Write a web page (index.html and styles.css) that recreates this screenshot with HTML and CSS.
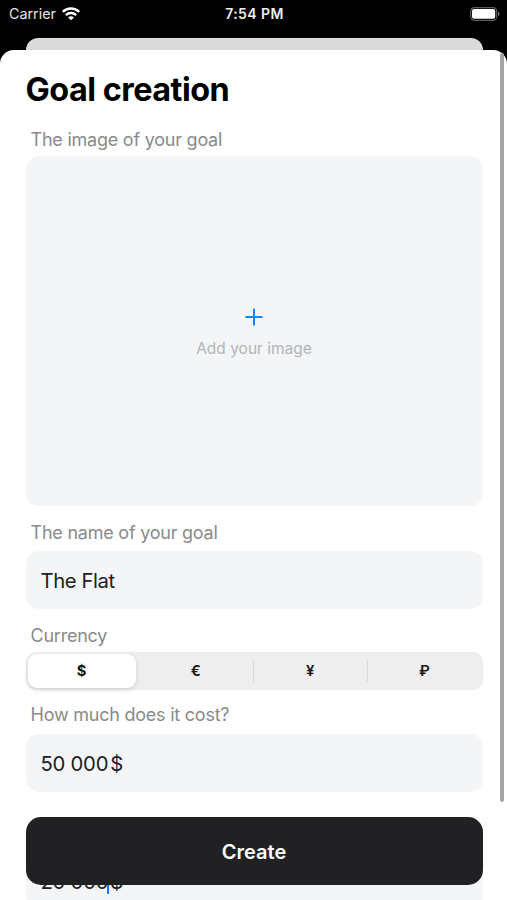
FILE: index.html
```html
<!DOCTYPE html>
<html lang="en">
<head>
<meta charset="utf-8">
<title>Goal creation</title>
<link rel="stylesheet" href="styles.css">
</head>
<body>
<div class="screen">
  <header class="status">
    <div class="carrier"><span>Carrier</span>
      <svg class="wifi" width="18" height="14" viewBox="0 0 18 14" fill="none" stroke="#fff" stroke-width="2.4">
        <path d="M.8 4.8C5.3.3 12.7.3 17.2 4.8"/>
        <path d="M3.8 8.1c2.9-2.8 7.5-2.8 10.4 0"/>
        <path d="M9 13.3 6.1 10.4c1.6-1.5 4.2-1.5 5.8 0z" fill="#fff" stroke="none"/>
      </svg>
    </div>
    <div class="time">7:54 PM</div>
    <svg class="battery" width="30" height="14" viewBox="0 0 30 14">
      <rect x=".7" y=".7" width="26" height="12.6" rx="3.6" fill="none" stroke="#5c5c5e" stroke-width="1.2"/>
      <rect x="2" y="2" width="23.2" height="9.7" rx="2" fill="#fff"/>
      <path d="M28 4.8c2 .6 2 3.8 0 4.4z" fill="#6c6c6e"/>
    </svg>
  </header>
  <div class="behind"></div>
  <main class="sheet">
    <h1>Goal creation</h1>
    <div class="label image-label"><span>The image of your goal</span></div>
    <div class="picker">
      <svg width="18" height="18" viewBox="0 0 18 18" stroke="#1c84f2" stroke-width="2" stroke-linecap="round"><path d="M9 1.2v15.6M1.2 9h15.6"/></svg>
      <span>Add your image</span>
    </div>
    <div class="label name-label"><span>The name of your goal</span></div>
    <div class="field"><span class="name">The Flat</span></div>
    <div class="label currency-label"><span>Currency</span></div>
    <div class="segments">
      <div class="segment selected">$</div>
      <div class="segment">€</div>
      <div class="segment divided">¥</div>
      <div class="segment divided">₽</div>
    </div>
    <div class="label cost-label"><span>How much does it cost?</span></div>
    <div class="field"><span class="amount">50 000</span><span class="unit">$</span></div>
    <div class="field next"><span class="amount">20 000</span><i class="caret"></i><span class="unit">$</span></div>
    <div class="scrollbar"></div>
  </main>
  <button class="create"><span>Create</span></button>
</div>
</body>
</html>
```
FILE: styles.css
```css
* { box-sizing: border-box; }
body { margin: 0; background: #000; font-family: Inter, "Liberation Sans", sans-serif; }
.screen { position: relative; width: 507px; height: 900px; overflow: hidden; background: #000; }
.status { display: grid; grid-template-columns: 1fr auto 1fr; align-items: center; height: 38px; padding: 0 7px 11px 9px; color: #fff; }
.carrier { display: flex; align-items: center; gap: 6px; font-size: 14.3px; color: #e4e4e4; }
.time { font-size: 14px; font-weight: 600; color: #eee; letter-spacing: .4px; }
.battery { justify-self: end; }
.behind { height: 12px; margin: 0 24.5px 0 25.5px; border-radius: 12px 12px 0 0; background: #dadada; }
.sheet { position: relative; height: 850px; padding: 0 24.5px 0 25.5px; border-radius: 14px 14px 0 0; background: #fff; }
h1 { margin: 0; padding-top: 19px; height: 78px; font-size: 32.4px; line-height: 41px; font-weight: 700; color: #000; white-space: nowrap; letter-spacing: -0.5px; }
.label { padding-left: 5px; font-size: 18px; line-height: 24px; color: #8a8a8a; white-space: nowrap; letter-spacing: -.23px; }
.image-label { height: 28px; }
.picker { display: flex; flex-direction: column; align-items: center; height: 350px; padding-top: 152px; border-radius: 13px; background: #f3f5f7; }
.picker span { margin-top: 13px; font-size: 15.5px; line-height: 20px; color: #b2b4b6; }
.name-label { height: 45px; padding-top: 15px; }
.field { display: flex; align-items: center; height: 58px; padding: 2px 15px 0; border-radius: 13px; background: #f3f5f7; font-size: 20.3px; line-height: 26px; color: #202022; letter-spacing: -.4px; }
.currency-label { height: 43px; padding-top: 15px; }
.segments { display: grid; grid-template-columns: repeat(4, 1fr); height: 38px; border-radius: 10px; background: #eee; }
.segment { position: relative; display: flex; align-items: center; justify-content: center; padding-right: 2px; font-size: 14.8px; font-weight: 600; color: #171717; }
.selected { margin: 2px 4px 2px 2px; padding-right: 0; border-radius: 9px; background: #fff; font-weight: 700; box-shadow: 0 2px 5px rgba(0,0,0,.13); }
.divided::before { content: ""; position: absolute; left: -1px; top: 8px; width: 1px; height: 22px; background: #d8d8da; }
.cost-label { height: 44px; padding-top: 13px; }
.amount { letter-spacing: -.25px; }
.unit { margin-left: 2px; }
.next { margin-top: 60px; }
.caret { width: 2px; height: 24px; margin: 0 -1px 0 -1px; background: #1677f0; }
.scrollbar { position: absolute; right: 3px; top: 3px; width: 4px; height: 749px; border-radius: 2px; background: #a5a5a5; }
.create { position: absolute; left: 25.5px; top: 817px; width: 457px; height: 68px; padding: 2px 0 0; border: 0; border-radius: 15px; background: #212123; color: #fff; font: 600 20px/26px Inter, "Liberation Sans", sans-serif; }
```
